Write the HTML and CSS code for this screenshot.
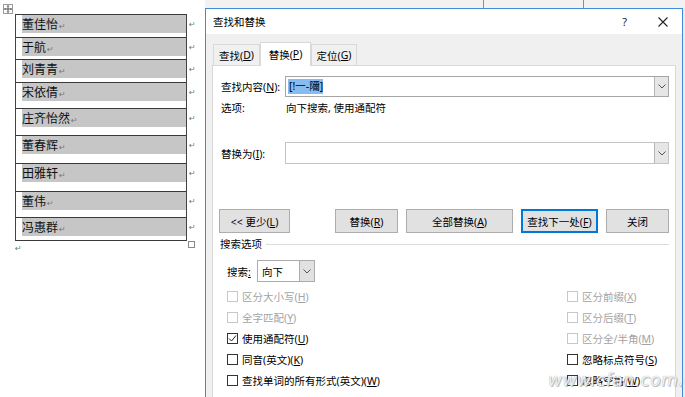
FILE: index.html
```html
<!DOCTYPE html>
<html lang="zh-CN">
<head>
<meta charset="utf-8">
<title>查找和替换</title>
<link rel="stylesheet" href="styles.css">
</head>
<body>
<div class="screen">
  <div class="doc">
    <div class="handle">
      <svg width="10" height="10" viewBox="0 0 10 10"><rect x="0.5" y="0.5" width="9" height="9" fill="#fff" stroke="#9a9a9a"/><path d="M5 1.5V8.5M1.5 5H8.5M4 2.5L5 1.5L6 2.5M4 7.5L5 8.5L6 7.5M2.5 4L1.5 5L2.5 6M7.5 4L8.5 5L7.5 6" fill="none" stroke="#333" stroke-width="0.8"/></svg>
    </div>
    <div class="table">
      <div class="trow"><div class="cell h23"><div class="shade">董佳怡<span class="pm">↵</span></div></div><span class="pm end">↵</span></div>
      <div class="trow"><div class="cell h22"><div class="shade">于航<span class="pm">↵</span></div></div><span class="pm end">↵</span></div>
      <div class="trow"><div class="cell h23"><div class="shade">刘青青<span class="pm">↵</span></div></div><span class="pm end">↵</span></div>
      <div class="trow"><div class="cell h26"><div class="shade">宋依倩<span class="pm">↵</span></div></div><span class="pm end">↵</span></div>
      <div class="trow"><div class="cell h27"><div class="shade">庄齐怡然<span class="pm">↵</span></div></div><span class="pm end">↵</span></div>
      <div class="trow"><div class="cell h28"><div class="shade">董春辉<span class="pm">↵</span></div></div><span class="pm end">↵</span></div>
      <div class="trow"><div class="cell h28"><div class="shade">田雅轩<span class="pm">↵</span></div></div><span class="pm end">↵</span></div>
      <div class="trow"><div class="cell h26"><div class="shade">董伟<span class="pm">↵</span></div></div><span class="pm end">↵</span></div>
      <div class="trow"><div class="cell h24 last"><div class="shade">冯惠群<span class="pm">↵</span></div></div><span class="pm end">↵</span></div>
    </div>
    <div class="after">
      <span class="pm">↵</span>
      <span class="corner"></span>
    </div>
  </div>

  <div class="win-area">
    <div class="behind"></div>
    <div class="dialog">
      <div class="titlebar">
        <span class="title">查找和替换</span>
        <span class="help">?</span>
        <svg class="close" width="10" height="10" viewBox="0 0 10 10"><path d="M0.5 0.5L9.5 9.5M9.5 0.5L0.5 9.5" stroke="#222" stroke-width="1.1"/></svg>
      </div>
      <div class="body">
        <div class="tabs">
          <div class="tab t1">查找(<u>D</u>)</div>
          <div class="tab t2 active">替换(<u>P</u>)</div>
          <div class="tab t3">定位(<u>G</u>)</div>
        </div>
        <div class="panel">
          <div class="frow">
            <span class="flabel">查找内容(<u>N</u>):</span>
            <div class="field dark">
              <span class="sel">[!一-隬]</span>
              <span class="dd"><svg width="8" height="5" viewBox="0 0 8 5"><path d="M0.5 0.5L4 4L7.5 0.5" fill="none" stroke="#555"/></svg></span>
            </div>
          </div>
          <div class="orow">
            <span class="flabel">选项:</span>
            <span class="oval">向下搜索, 使用通配符</span>
          </div>
          <div class="frow rrow">
            <span class="flabel">替换为(<u>I</u>):</span>
            <div class="field light">
              <span class="dd"><svg width="8" height="5" viewBox="0 0 8 5"><path d="M0.5 0.5L4 4L7.5 0.5" fill="none" stroke="#555"/></svg></span>
            </div>
          </div>
          <div class="btnrow">
            <button class="btn b-less">&lt;&lt; 更少(<u>L</u>)</button>
            <div class="btngroup">
              <button class="btn b-rep">替换(<u>R</u>)</button>
              <button class="btn b-all">全部替换(<u>A</u>)</button>
              <button class="btn b-next default">查找下一处(<u>F</u>)</button>
              <button class="btn b-close">关闭</button>
            </div>
          </div>
          <div class="section">
            <span>搜索选项</span>
            <span class="rule"></span>
          </div>
          <div class="srow">
            <span class="slabel">搜索<u>:</u></span>
            <div class="select">
              <span class="sval">向下</span>
              <span class="sdd"><svg width="8" height="5" viewBox="0 0 8 5"><path d="M0.5 0.5L4 4L7.5 0.5" fill="none" stroke="#555"/></svg></span>
            </div>
          </div>
          <div class="checks">
            <div class="ck disabled"><span class="box"></span>区分大小写(<u>H</u>)</div>
            <div class="ck disabled"><span class="box"></span>区分前缀(<u>X</u>)</div>
            <div class="ck disabled"><span class="box"></span>全字匹配(<u>Y</u>)</div>
            <div class="ck disabled"><span class="box"></span>区分后缀(<u>T</u>)</div>
            <div class="ck"><span class="box"><svg width="9" height="9" viewBox="0 0 9 9"><path d="M1 4.5L3.5 7L8 1.5" fill="none" stroke="#222" stroke-width="1"/></svg></span>使用通配符(<u>U</u>)</div>
            <div class="ck disabled"><span class="box"></span>区分全/半角(<u>M</u>)</div>
            <div class="ck"><span class="box"></span>同音(英文)(<u>K</u>)</div>
            <div class="ck"><span class="box"></span>忽略标点符号(<u>S</u>)</div>
            <div class="ck"><span class="box"></span>查找单词的所有形式(英文)(<u>W</u>)</div>
            <div class="ck"><span class="box"></span>忽略空格(<u>W</u>)</div>
          </div>
        </div>
      </div>
    </div>
    <div class="watermark">www.cfan.com.cn</div>
  </div>
</div>
</body>
</html>
```

FILE: styles.css
```css
* { box-sizing: border-box; }
html, body { margin: 0; padding: 0; }
body {
  width: 685px;
  height: 397px;
  overflow: hidden;
  background: #fff;
  font-family: "Noto Sans", "Noto Sans CJK SC", sans-serif;
  color: #000;
}
.screen {
  display: flex;
  width: 685px;
  height: 397px;
  overflow: hidden;
}

/* ---------- document side ---------- */
.doc {
  position: relative;
  width: 205px;
  flex: none;
  padding: 14px 0 0 15px;
  background: #fff;
}
.handle {
  position: absolute;
  left: 3px;
  top: 4px;
  width: 10px;
  height: 10px;
  line-height: 0;
}
.trow {
  display: flex;
  align-items: flex-start;
}
.cell {
  width: 172px;
  border-left: 1px solid #444;
  border-right: 1px solid #444;
  border-top: 1px solid #3a3a3a;
}
.cell.last { border-bottom: 1px solid #3a3a3a; }
.h22 { height: 22px; }
.h23 { height: 23px; }
.h24 { height: 24px; }
.h26 { height: 26px; }
.h27 { height: 27px; }
.h28 { height: 28px; }
.shade {
  margin-left: 6px;
  height: 18px;
  line-height: 18px;
  background: #c6c6c6;
  font-family: "Noto Sans CJK SC", sans-serif;
  font-size: 12px;
  color: #111;
  white-space: nowrap;
}
.pm {
  font-family: "DejaVu Sans", sans-serif;
  font-size: 8px;
  color: #777;
  margin-left: 1px;
}
.pm.end {
  margin-left: 2px;
  line-height: 18px;
  padding-top: 2px;
}
.after {
  display: flex;
  justify-content: space-between;
  width: 180px;
  height: 14px;
}
.after .pm { margin-left: 0; line-height: 12px; padding-top: 2px; }
.corner {
  width: 7px;
  height: 7px;
  margin-top: 0;
  border: 1px solid #888;
  background: #fff;
}

/* ---------- dialog ---------- */
.win-area {
  position: relative;
  width: 480px;
  flex: none;
  background: #ececec;
}
.behind {
  height: 8px;
  background:
    linear-gradient(to right, transparent 278px, #8c8c8c 278px, #8c8c8c 279px, transparent 279px,
      transparent 378px, #8c8c8c 378px, #8c8c8c 379px, transparent 379px),
    #f2f2f2;
}
.dialog {
  width: 478px;
  height: 389px;
  border: 1px solid #3f8ad9;
  border-bottom: none;
  background: #f0f0f0;
  font-size: 10.5px;
  display: flex;
  flex-direction: column;
}
.titlebar {
  height: 25px;
  background: #fff;
  display: flex;
  align-items: center;
  padding-left: 7px;
  flex: none;
}
.title {
  font-family: "Noto Sans CJK SC", sans-serif;
  font-size: 10.5px;
  flex: 1;
}
.help {
  font-size: 11px;
  margin-right: 31px;
  color: #222;
}
.close { margin-right: 14px; }

.body {
  flex: 1;
  padding-top: 8px;
  display: flex;
  flex-direction: column;
}
.tabs {
  display: flex;
  align-items: flex-end;
  margin-left: 7px;
  height: 23px;
  flex: none;
}
.tab {
  height: 21px;
  border: 1px solid #d9d9d9;
  border-bottom: none;
  background: #f0f0f0;
  display: flex;
  align-items: center;
  justify-content: center;
  white-space: nowrap;
}
.t1 { width: 47px; }
.t2 { width: 51px; }
.t3 { width: 46px; }
.tab.active {
  height: 24px;
  margin-bottom: -1px;
  background: #fff;
  position: relative;
  z-index: 1;
  padding-bottom: 1px;
}
.panel {
  margin-left: 6px;
  width: 464px;
  flex: 1;
  border: 1px solid #d9d9d9;
  border-bottom: none;
  background: #fff;
  padding: 10px 6px 0 6px;
}
.frow {
  display: flex;
  align-items: center;
  height: 21px;
}
.flabel {
  width: 66px;
  padding-left: 2px;
  flex: none;
  white-space: nowrap;
}
.field {
  flex: 1;
  height: 100%;
  display: flex;
  align-items: center;
  background: #fff;
  padding-left: 2px;
}
.field.dark { border: 1px solid #a6a6a6; }
.field.light { border: 1px solid #c4c4c4; }
.sel {
  background: #86bdee;
  line-height: 15px;
  padding: 0 0 0 1px;
}
.dd {
  margin-left: auto;
  width: 14px;
  height: 100%;
  background: #e6e6e6;
  border-left: 1px solid #b5b5b5;
  display: flex;
  align-items: center;
  justify-content: center;
}
.orow {
  display: flex;
  margin-top: 4px;
  height: 14px;
  line-height: 14px;
}
.oval { padding-left: 1px; }
.rrow {
  margin-top: 27px;
  height: 22px;
}
.btnrow {
  display: flex;
  justify-content: space-between;
  margin-top: 45px;
  height: 24px;
}
.btngroup {
  display: flex;
  gap: 8px;
}
.btn {
  height: 24px;
  border: 1px solid #adadad;
  background: #e1e1e1;
  font-family: "Noto Sans", "Noto Sans CJK SC", sans-serif;
  font-size: 10.5px;
  color: #000;
  padding: 0;
  margin: 0;
  white-space: nowrap;
}
.b-less { width: 71px; }
.b-rep { width: 63px; }
.b-all { width: 107px; }
.b-next { width: 77px; }
.b-close { width: 63px; }
.btn.default {
  border: 1px solid #0078d7;
  box-shadow: inset 0 0 0 1px #0078d7;
}
.section {
  display: flex;
  align-items: center;
  margin-top: 4px;
  height: 14px;
  line-height: 14px;
  padding-left: 1px;
}
.rule {
  flex: 1;
  margin-left: 4px;
  border-top: 1px solid #dcdcdc;
  margin-top: 1px;
}
.srow {
  display: flex;
  align-items: center;
  margin-top: 9px;
  height: 22px;
  padding-left: 8px;
}
.slabel { width: 30px; flex: none; }
.select {
  width: 58px;
  height: 22px;
  border: 1px solid #acacac;
  background: #fff;
  display: flex;
  align-items: center;
}
.sval { padding-left: 4px; flex: 1; }
.sdd {
  width: 15px;
  height: 100%;
  background: #e1e1e1;
  border-left: 1px solid #acacac;
  display: flex;
  align-items: center;
  justify-content: center;
}
.checks {
  display: grid;
  grid-template-columns: 340px 1fr;
  grid-auto-rows: 21px;
  margin-top: 4px;
  padding-left: 8px;
}
.ck {
  display: flex;
  align-items: center;
  white-space: nowrap;
}
.box {
  width: 11px;
  height: 11px;
  border: 1px solid #333;
  background: #fff;
  margin-right: 4px;
  display: flex;
  align-items: center;
  justify-content: center;
  flex: none;
}
.ck.disabled { color: #a3a3a3; }
.ck.disabled .box { border-color: #c8c8c8; }

.watermark {
  position: absolute;
  left: 343px;
  top: 370px;
  font-family: "DejaVu Sans", sans-serif;
  font-style: italic;
  font-size: 17px;
  letter-spacing: 0.5px;
  color: rgba(255, 255, 255, 0.85);
  text-shadow: 0 0 1px #999, 1px 1px 0 rgba(150,150,150,0.6);
  white-space: nowrap;
}
```
